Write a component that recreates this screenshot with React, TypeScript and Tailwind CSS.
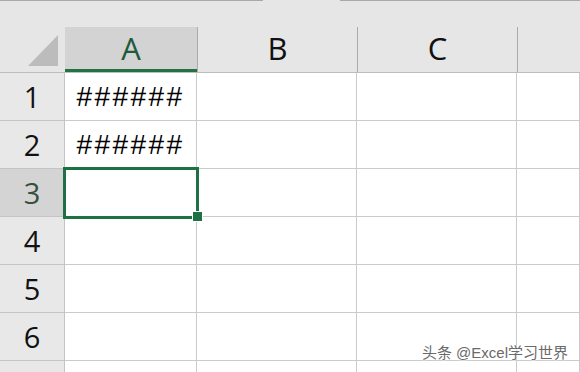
const cols = [
  { key: 'A', w: 'w-[132px]' },
  { key: 'B', w: 'w-[160px]' },
  { key: 'C', w: 'w-[160px]' },
  { key: 'D', w: 'flex-1' },
];

const rows = [
  { n: '1', a: '######' },
  { n: '2', a: '######' },
  { n: '3', a: '' },
  { n: '4', a: '' },
  { n: '5', a: '' },
  { n: '6', a: '' },
  { n: '', a: '' },
];

const headFont = { fontFamily: '"Open Sans", "Noto Sans", sans-serif' };

const App = () => {
  return (
    <div className="relative w-[580px] h-[372px] overflow-hidden bg-white select-none">
      {/* strip above the headers */}
      <div className="flex h-[27px] bg-[#e6e6e6]">
        <div className="w-[263px] border-t border-[#a9a9a9]" />
        <div className="w-[77px]" />
        <div className="flex-1 border-t border-[#a9a9a9]" />
      </div>

      {/* column headers */}
      <div className="flex h-[46px] bg-[#e6e6e6] border-b border-[#bdbdbd]" style={headFont}>
        <div className="w-[65px] flex items-end justify-end pb-[6px] pr-[7px]">
          <svg width="30" height="31" viewBox="0 0 30 31">
            <polygon points="30,0 30,31 0,31" fill="#bcbcbc" />
          </svg>
        </div>
        {cols.map((c) =>
          c.key === 'A' ? (
            <div
              key={c.key}
              className={`${c.w} flex items-end justify-center pb-[5px] bg-[#d3d3d3] border-b-[3px] border-[#217346] text-[31px] leading-none text-[#1f5a3a]`}
            >
              A
            </div>
          ) : (
            <div
              key={c.key}
              className={`${c.w} flex items-end justify-center pb-[8px] border-l border-[#ababab] text-[31px] leading-none text-[#111]`}
            >
              {c.key === 'D' ? '' : c.key}
            </div>
          )
        )}
      </div>

      {/* rows */}
      {rows.map((r, i) => (
        <div key={i} className="flex h-[48px]">
          <div
            className={`w-[65px] flex items-end justify-center pb-[9px] border-r border-b border-[#c4c4c4] text-[29px] leading-none ${
              r.n === '3' ? 'bg-[#d4d4d4] text-[#35503f]' : 'bg-[#e8e8e8] text-[#111]'
            }`}
            style={headFont}
          >
            {r.n}
          </div>
          {cols.map((c) => (
            <div
              key={c.key}
              className={`${c.w} flex items-end justify-center pb-[9px] border-r border-b border-[#cbcbcb] text-[28px] leading-none tracking-[2.4px] text-black`}
              style={{ fontFamily: '"Liberation Sans", Arial, sans-serif' }}
            >
              {c.key === 'A' ? r.a : ''}
            </div>
          ))}
        </div>
      ))}

      {/* active cell A3 */}
      <div className="absolute left-[63px] top-[167px] w-[136px] h-[52px] border-[3px] border-[#1e7145]" />
      <div className="absolute left-[192px] top-[211px] w-[11px] h-[11px] bg-[#1e7145] border-[1.5px] border-white" />

      {/* watermark */}
      <div
        className="absolute right-[12px] bottom-[12px] text-[15px] leading-none text-[#6a6a6a]"
        style={{
          fontFamily: '"Liberation Sans", "Noto Sans CJK SC", sans-serif',
          textShadow: '0 0 2px #fff, 0 0 2px #fff',
        }}
      >
        头条 @Excel学习世界
      </div>
    </div>
  );
};

export default App;
